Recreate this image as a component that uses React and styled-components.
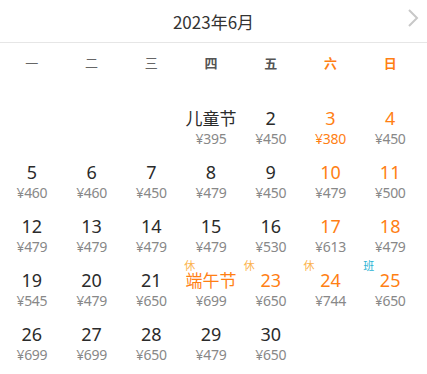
import React from 'react';
import styled, { createGlobalStyle } from 'styled-components';

const GlobalStyle = createGlobalStyle`
  body {
    margin: 0;
    background: #fff;
    font-family: "Noto Sans", "Noto Sans CJK SC", sans-serif;
  }
`;

const Container = styled.div`
  width: 427px;
  height: 374px;
  overflow: hidden;
  background: #fff;
`;

const Header = styled.div`
  position: relative;
  height: 42px;
  display: flex;
  align-items: center;
  justify-content: center;
  border-bottom: 1px solid #e6e6e6;
`;

const Title = styled.div`
  font-size: 17px;
  color: #333;
  font-family: "Noto Sans CJK SC", sans-serif;
`;

const NextButton = styled.div`
  position: absolute;
  right: 6px;
  top: 8px;
  width: 16px;
  height: 20px;
`;

const Weekdays = styled.div`
  display: grid;
  grid-template-columns: repeat(7, 1fr);
  padding: 0 7px 0 2px;
  height: 40px;
  margin-bottom: 14px;
`;

const Weekday = styled.div`
  text-align: center;
  line-height: 40px;
  font-size: 13px;
  font-family: "Noto Sans CJK SC", sans-serif;
  color: ${({ $weekend, $bold }) => ($weekend ? '#ff7f14' : $bold ? '#555' : '#666')};
  font-weight: ${({ $weekend, $bold }) => ($weekend || $bold ? 700 : 400)};
`;

const Grid = styled.div`
  display: grid;
  grid-template-columns: repeat(7, 1fr);
  grid-auto-rows: 54px;
  padding: 0 7px 0 2px;
`;

const Cell = styled.div`
  position: relative;
  display: flex;
  flex-direction: column;
  align-items: center;
  padding-top: 10px;
`;

const Day = styled.div`
  font-size: 18px;
  line-height: 22px;
  color: ${({ $orange }) => ($orange ? '#ff7f14' : '#2b2b2b')};
`;

const Festival = styled(Day)`
  font-family: "Noto Sans CJK SC", sans-serif;
  font-size: 17px;
`;

const Price = styled.div`
  font-size: 14px;
  line-height: 19px;
  letter-spacing: -0.3px;
  color: ${({ $orange }) => ($orange ? '#ff7f14' : '#888')};
`;

const Tag = styled.span`
  position: absolute;
  top: 0;
  left: 3px;
  font-size: 11px;
  line-height: 13px;
  font-family: "Noto Sans CJK SC", sans-serif;
  color: ${({ $work }) => ($work ? '#2bb3d3' : '#fbb450')};
`;

const weekdays = ['一', '二', '三', '四', '五', '六', '日'];

const prices = {
  1: 395, 2: 450, 3: 380, 4: 450,
  5: 460, 6: 460, 7: 450, 8: 479, 9: 450, 10: 479, 11: 500,
  12: 479, 13: 479, 14: 479, 15: 479, 16: 530, 17: 613, 18: 479,
  19: 545, 20: 479, 21: 650, 22: 699, 23: 650, 24: 744, 25: 650,
  26: 699, 27: 699, 28: 650, 29: 479, 30: 650,
};

const festivals = { 1: { name: '儿童节' }, 22: { name: '端午节', orange: true } };
const tags = { 22: '休', 23: '休', 24: '休', 25: '班' };
const orangeDays = [23, 24, 25];

function Chevron() {
  return (
    <svg width="16" height="20" viewBox="0 0 16 20">
      <path d="M4 2 L12 10 L4 18" fill="none" stroke="#c8c8c8" strokeWidth="2" />
    </svg>
  );
}

function DayCell({ day }) {
  const col = (day + 2) % 7;
  const weekend = col === 5 || col === 6;
  const fest = festivals[day];
  const tag = tags[day];
  return (
    <Cell style={day === 1 ? { gridColumnStart: 4 } : undefined}>
      {tag && <Tag $work={tag === '班'}>{tag}</Tag>}
      {fest ? (
        <Festival $orange={fest.orange}>{fest.name}</Festival>
      ) : (
        <Day $orange={weekend || orangeDays.includes(day)}>{day}</Day>
      )}
      <Price $orange={day === 3}>¥{prices[day]}</Price>
    </Cell>
  );
}

export default function App() {
  const days = Array.from({ length: 30 }, (_, i) => i + 1);
  return (
    <Container>
      <GlobalStyle />
      <Header>
        <Title>2023年6月</Title>
        <NextButton>
          <Chevron />
        </NextButton>
      </Header>
      <Weekdays>
        {weekdays.map((w, i) => (
          <Weekday key={w} $weekend={i >= 5} $bold={i === 3 || i === 4}>
            {w}
          </Weekday>
        ))}
      </Weekdays>
      <Grid>
        {days.map((d) => (
          <DayCell key={d} day={d} />
        ))}
      </Grid>
    </Container>
  );
}
